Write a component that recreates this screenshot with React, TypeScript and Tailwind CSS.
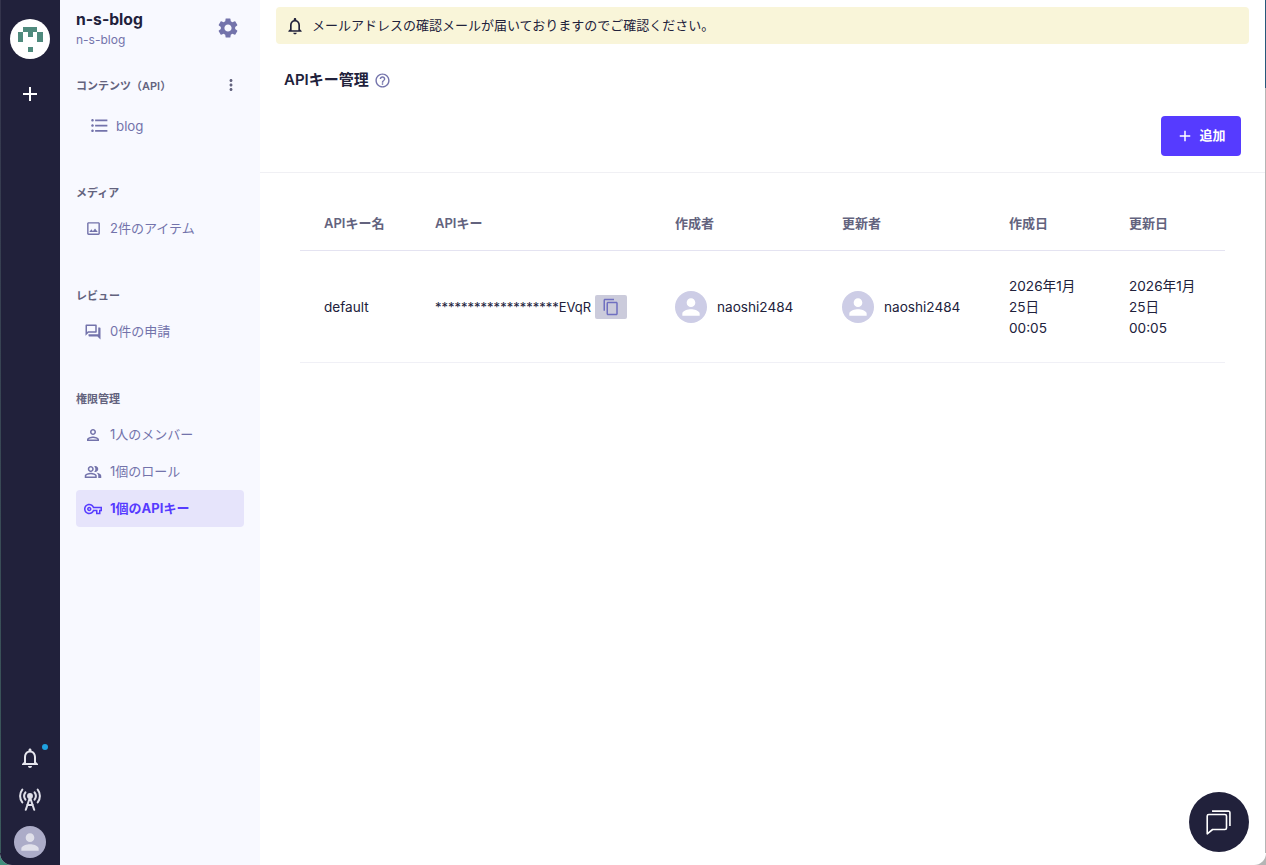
import {
  MdAdd,
  MdContentCopy,
  MdFormatListBulleted,
  MdMoreVert,
  MdOutlineImage,
  MdOutlineNotifications,
  MdOutlinePeopleAlt,
  MdOutlinePerson,
  MdOutlineQuestionAnswer,
  MdOutlineVpnKey,
  MdPerson,
  MdSettings,
  MdHelpOutline,
} from "react-icons/md";
import type { ReactNode } from "react";

const font = "[font-family:Inter,'Noto_Sans_CJK_JP',sans-serif]";

function Logo() {
  return (
    <div className="flex h-10 w-10 items-center justify-center rounded-full bg-white">
      <svg width="40" height="40" viewBox="0 0 40 40" fill="#4f8a7d">
        <rect x="13" y="8" width="14" height="5" />
        <rect x="8" y="13" width="5" height="10" />
        <rect x="27" y="13" width="6" height="10" />
        <rect x="18" y="13" width="5" height="5" />
        <rect x="18" y="28" width="5" height="5" />
      </svg>
    </div>
  );
}

function Antenna() {
  return (
    <svg width="22" height="24" viewBox="2 1 18 20" fill="none" stroke="#e0e0ea" strokeWidth="1.7" strokeLinecap="round" strokeLinejoin="round">
      <circle cx="11" cy="8.5" r="1.6" fill="#e0e0ea" />
      <path d="M11 9.5 7.5 20M11 9.5 14.5 20M8.6 16h4.8" />
      <path d="M7.2 5.5a5 5 0 0 0 0 6M14.8 5.5a5 5 0 0 1 0 6" />
      <path d="M4.6 3.2a8.5 8.5 0 0 0 0 10.6M17.4 3.2a8.5 8.5 0 0 1 0 10.6" />
    </svg>
  );
}

function ChatBubbles() {
  return (
    <svg width="30" height="30" viewBox="0 0 28 28" fill="none" stroke="#fff" strokeWidth="1.5" strokeLinejoin="round">
      <path d="M3 8.5a1.5 1.5 0 0 1 1.5-1.5h15a1.5 1.5 0 0 1 1.5 1.5v11a1.5 1.5 0 0 1-1.5 1.5H8l-5 4z" />
      <path d="M7.5 3.8h15.2A1.5 1.5 0 0 1 24.2 5.3v12.4" />
    </svg>
  );
}

function NavGroup({ title, action, children, className }: { title: string; action?: ReactNode; children: ReactNode; className?: string }) {
  return (
    <div className={className}>
      <div className="flex h-[18px] items-center justify-between">
        <span className="pt-[2px] text-[11px] font-semibold text-[#63637e]">{title}</span>
        {action}
      </div>
      {children}
    </div>
  );
}

function NavItem({ icon, label, active }: { icon: ReactNode; label: string; active?: boolean }) {
  return (
    <div
      className={`flex h-[37px] items-center gap-[8px] rounded-[4px] pl-[8px] text-[13px] ${
        active ? "bg-[#e6e4fb] font-bold text-[#563bff]" : "text-[#7373ab]"
      }`}
    >
      <span className="flex w-[18px] justify-center">{icon}</span>
      <span className="pt-[1px]">{label}</span>
    </div>
  );
}

function Person({ name }: { name: string }) {
  return (
    <div className="flex items-center gap-[10px]">
      <div className="flex h-8 w-8 items-center justify-center rounded-full bg-[#cdcde6]">
        <MdPerson size={26} className="text-white" />
      </div>
      <span className="pt-[2px]">{name}</span>
    </div>
  );
}

const headers = [
  ["APIキー名", "w-[110px] pl-[24px]"],
  ["APIキー", "w-[240px] pl-[25px]"],
  ["作成者", "w-[167px] pl-[25px]"],
  ["更新者", "w-[167px] pl-[25px]"],
  ["作成日", "w-[120px] pl-[25px]"],
  ["更新日", "w-[121px] pl-[25px]"],
];

export default function App() {
  return (
    <div className={`relative h-[865px] w-[1266px] bg-gradient-to-r from-[#3f8f7c] to-[#b5b5b5] text-[#21213b] ${font}`}>
      <div className="flex h-full overflow-hidden rounded-b-[12px] bg-white">
        {/* 左レール */}
        <div className="flex w-[60px] shrink-0 flex-col items-center bg-[#21213b] pt-[19px] pb-[7px]">
          <Logo />
          <MdAdd size={24} className="mt-[23px] text-white" />
          <div className="relative mt-auto">
            <MdOutlineNotifications size={24} className="text-[#e6e6ee]" />
            <span className="absolute -top-[2px] right-[-6px] h-[6px] w-[6px] rounded-full bg-[#1fa2e0]" />
          </div>
          <div className="mt-[17px]">
            <Antenna />
          </div>
          <div className="mt-[15px] flex h-8 w-8 items-center justify-center rounded-full bg-[#acacc8]">
            <MdPerson size={26} className="text-[#e0e0ea]" />
          </div>
        </div>

        {/* サイドバー */}
        <div className="w-[200px] shrink-0 bg-[#f8f9ff] px-4 pt-[10px]">
          <div className="flex items-start justify-between">
            <div>
              <div className="text-[15.7px] leading-[20px] font-bold">n-s-blog</div>
              <div className="mt-[1px] text-[12px] leading-[18px] text-[#7373ab]">n-s-blog</div>
            </div>
            <MdSettings size={24} className="mt-[6px] mr-[4px] text-[#7373ab]" />
          </div>
          <NavGroup
            className="mt-[27px]"
            title="コンテンツ（API）"
            action={<MdMoreVert size={18} className="mr-[4px] text-[#63637e]" />}
          >
            <div className="mt-[13px] flex h-[37px] items-center gap-[6px] pl-[13px] text-[13.3px] text-[#7373ab]">
              <MdFormatListBulleted size={21} />
              <span className="pt-[2px]">blog</span>
            </div>
          </NavGroup>
          <NavGroup className="mt-[39px]" title="メディア">
            <div className="mt-[9px]">
              <NavItem icon={<MdOutlineImage size={17} />} label="2件のアイテム" />
            </div>
          </NavGroup>
          <NavGroup className="mt-[39px]" title="レビュー">
            <div className="mt-[9px]">
              <NavItem icon={<MdOutlineQuestionAnswer size={18} />} label="0件の申請" />
            </div>
          </NavGroup>
          <NavGroup className="mt-[39px]" title="権限管理">
            <div className="mt-[9px]">
              <NavItem icon={<MdOutlinePerson size={18} />} label="1人のメンバー" />
              <NavItem icon={<MdOutlinePeopleAlt size={18} />} label="1個のロール" />
              <NavItem active icon={<MdOutlineVpnKey size={20} />} label="1個のAPIキー" />
            </div>
          </NavGroup>
        </div>

        {/* メイン */}
        <div className="min-w-0 flex-1">
          <div className="px-4 pt-[7px] pr-[17px]">
            <div className="flex h-[37px] items-center gap-[7px] rounded-[4px] bg-[#f9f5d9] pl-[9px] text-[13px]">
              <MdOutlineNotifications size={20} />
              メールアドレスの確認メールが届いておりますのでご確認ください。
            </div>
          </div>
          <div className="mt-[25px] flex h-[22px] items-center gap-[5px] pl-[24px] text-[15px] font-semibold">
            APIキー管理
            <MdHelpOutline size={17} className="text-[#7373ab]" />
          </div>
          <div className="mt-[25px] flex justify-end border-b border-[#f0f0f4] pr-[25px] pb-4">
            <button className="flex h-10 w-20 items-center justify-center gap-[5px] rounded-[4px] bg-[#563bff] text-[13px] font-bold text-white">
              <MdAdd size={18} />
              追加
            </button>
          </div>

          <div className="mt-[26px] ml-[40px] w-[925px] text-[13px]">
            <div className="flex h-[52px] items-center border-b border-[#e4e3f1] pb-[1px] font-semibold text-[#63637e]">
              {headers.map(([label, width]) => (
                <div key={label} className={width}>
                  {label}
                </div>
              ))}
            </div>
            <div className="flex h-[112px] items-center border-b border-[#f0f0f6] text-[13.6px]">
              <div className="w-[110px] pt-[2px] pl-[24px]">default</div>
              <div className="flex w-[240px] items-center gap-[4px] pl-[25px]">
                <span className="pt-[2px] text-[13px]">*******************EVqR</span>
                <span className="flex h-[24px] w-[32px] items-center justify-center rounded-[2px] bg-[#cbcbdb]">
                  <MdContentCopy size={18} className="text-[#6f6fc0]" />
                </span>
              </div>
              <div className="w-[167px] pl-[25px]">
                <Person name="naoshi2484" />
              </div>
              <div className="w-[167px] pl-[25px]">
                <Person name="naoshi2484" />
              </div>
              <div className="w-[120px] pt-[2px] pr-[20px] pl-[25px] leading-[21px]">
                2026年1月25日
                <br />
                00:05
              </div>
              <div className="w-[121px] pt-[2px] pr-[20px] pl-[25px] leading-[21px]">
                2026年1月25日
                <br />
                00:05
              </div>
            </div>
          </div>
        </div>
      </div>

      {/* チャットボタン */}
      <div className="absolute right-[17px] bottom-[13px] flex h-[60px] w-[60px] items-center justify-center rounded-full bg-[#21213b]">
        <ChatBubbles />
      </div>

      {/* ウィンドウの端 */}
      <div className="absolute top-0 bottom-[12px] left-0 w-[1px] bg-gradient-to-b from-[#34344c] to-[#3b5a5c]" />
      <div className="absolute top-0 right-0 bottom-[12px] w-[1px] bg-[linear-gradient(to_bottom,#27597a_0,#27597a_88px,#b5b5b5_88px)]" />
    </div>
  );
}
